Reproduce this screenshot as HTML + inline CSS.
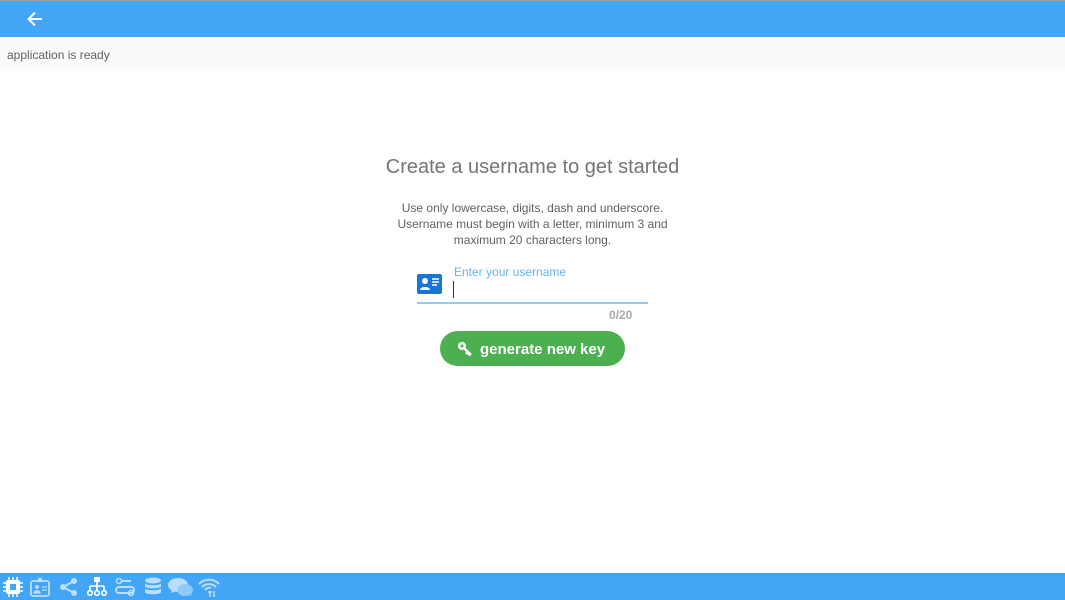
<!DOCTYPE html>
<html><head><meta charset="utf-8"><style>
*{margin:0;padding:0;box-sizing:border-box}
body{width:1065px;height:600px;overflow:hidden;background:#fff;font-family:"Liberation Sans",Roboto,sans-serif;position:relative}
.top{position:absolute;left:0;top:0;width:1065px;height:37px;background:#42a5f5;border-top:1px solid #9e9e9e}
.status{position:absolute;left:0;top:37px;width:1065px;height:32px;background:#fafafa;font-size:12px;color:#616161;padding:11px 0 0 7px}
h1{position:absolute;top:156px;left:0;width:1065px;text-align:center;font-weight:400;font-size:20px;color:#757575}
.desc{position:absolute;top:200px;left:0;width:1065px;text-align:center;font-size:12px;line-height:16px;color:#616161}
.label{position:absolute;left:454px;top:265px;font-size:12px;color:#64b5f6}
.caret{position:absolute;left:453px;top:281px;width:1px;height:17px;background:#333}
.line{position:absolute;left:417px;top:302px;width:231px;height:2px;background:#90caf9}
.count{position:absolute;left:609px;top:308px;font-size:12px;color:#aaa;font-weight:bold}
.btn{position:absolute;left:440px;top:331px;width:185px;height:35px;border-radius:18px;background:#4caf50;color:#fff;font-weight:bold;font-size:15px;line-height:37px;padding-left:40px}
.bot{position:absolute;left:0;top:573px;width:1065px;height:27px;background:#42a5f5}
.bot svg{position:absolute;top:4px}
</style></head><body>
<div class="top"><svg style="position:absolute;left:26px;top:9px" width="18" height="18" viewBox="0 0 18 18"><path d="M16 9H3M9 2.5L2.5 9 9 15.5" stroke="#fff" stroke-width="2" fill="none"/></svg></div>
<div class="status">application is ready</div>
<h1>Create a username to get started</h1>
<div class="desc">Use only lowercase, digits, dash and underscore.<br>Username must begin with a letter, minimum 3 and<br>maximum 20 characters long.</div>
<svg style="position:absolute;left:417px;top:274px" width="25" height="20" viewBox="0 0 25 20"><rect width="25" height="20" rx="2" fill="#1976d2"/><circle cx="8" cy="7" r="3" fill="#fff"/><path d="M3 16c0-4 10-4 10 0z" fill="#fff"/><path d="M15 5h7M15 8h7M15 11h5" stroke="#fff" stroke-width="1.5"/></svg>
<div class="label">Enter your username</div>
<div class="caret"></div>
<div class="line"></div>
<div class="count">0/20</div>
<div class="btn"><svg style="position:absolute;left:17px;top:10px" width="16" height="16" viewBox="0 0 16 16"><circle cx="5" cy="5" r="4" fill="#fff"/><circle cx="5" cy="5" r="1.5" fill="#4caf50"/><path d="M7 7l7 7M11 11l-2 2M13 13l-1.5 1.5" stroke="#fff" stroke-width="2.4"/></svg>generate new key</div>
<div class="bot">
<svg style="left:3px" width="20" height="20" viewBox="0 0 20 20"><rect x="3" y="3" width="14" height="14" rx="2" fill="#fff"/><rect x="7" y="7" width="6" height="6" fill="#42a5f5"/><path d="M6 0v3M10 0v3M14 0v3M6 17v3M10 17v3M14 17v3M0 6h3M0 10h3M0 14h3M17 6h3M17 10h3M17 14h3" stroke="#fff" stroke-width="1.5"/></svg>
<svg style="left:30px" width="20" height="20" viewBox="0 0 20 20"><rect x="1" y="4" width="18" height="15" rx="2" fill="none" stroke="#bbdefb" stroke-width="1.8"/><rect x="8" y="1" width="4" height="4" fill="#bbdefb"/><circle cx="7" cy="10" r="2" fill="#bbdefb"/><path d="M4 16c0-3 6-3 6 0zM12 10h5M12 13h5" fill="#bbdefb" stroke="#bbdefb" stroke-width="1.3"/></svg>
<svg style="left:59px" width="20" height="20" viewBox="0 0 20 20"><circle cx="15" cy="4" r="3" fill="#bbdefb"/><circle cx="4" cy="10" r="3" fill="#bbdefb"/><circle cx="15" cy="16" r="3" fill="#bbdefb"/><path d="M15 4L4 10l11 6" stroke="#bbdefb" stroke-width="2" fill="none"/></svg>
<svg style="left:86px" width="22" height="20" viewBox="0 0 22 20"><rect x="8" y="0" width="6" height="5" fill="#fff"/><path d="M11 5v4M4 9h14M4 9v4M11 9v4M18 9v4" stroke="#fff" stroke-width="1.6" fill="none"/><g fill="none" stroke="#fff" stroke-width="1.6"><circle cx="4" cy="16" r="2.3"/><circle cx="11" cy="16" r="2.3"/><circle cx="18" cy="16" r="2.3"/></g></svg>
<svg style="left:115px" width="20" height="20" viewBox="0 0 20 20"><path d="M6 4h10M4 10h12a3 3 0 0 1 0 6H4a3 3 0 0 1 0-6h0" stroke="#bbdefb" stroke-width="2" fill="none"/><circle cx="4" cy="4" r="2.5" fill="none" stroke="#bbdefb" stroke-width="1.6"/><circle cx="16" cy="16" r="2.5" fill="none" stroke="#bbdefb" stroke-width="1.6"/></svg>
<svg style="left:144px" width="18" height="20" viewBox="0 0 18 20"><ellipse cx="9" cy="3.5" rx="8" ry="3" fill="#bbdefb"/><path d="M1 6c0 3 16 3 16 0v3c0 3-16 3-16 0zM1 11c0 3 16 3 16 0v4c0 3-16 3-16 0z" fill="#bbdefb"/></svg>
<svg style="left:168px" width="27" height="20" viewBox="0 0 27 20"><ellipse cx="10" cy="8" rx="10" ry="7" fill="#bbdefb"/><path d="M2 16l4-4 3 2z" fill="#bbdefb"/><ellipse cx="17" cy="13" rx="8" ry="6" fill="#90caf9"/><path d="M24 19l-3-4-3 2z" fill="#90caf9"/></svg>
<svg style="left:198px" width="22" height="20" viewBox="0 0 22 20"><path d="M1 7a14 14 0 0 1 20 0M4 10a10 10 0 0 1 14 0M7 13a6 6 0 0 1 6-2" stroke="#bbdefb" stroke-width="2" fill="none"/><path d="M10 15h4M12 14v6M16 14v6M15 19h2" stroke="#bbdefb" stroke-width="1.6"/></svg>
</div>
</body></html>
